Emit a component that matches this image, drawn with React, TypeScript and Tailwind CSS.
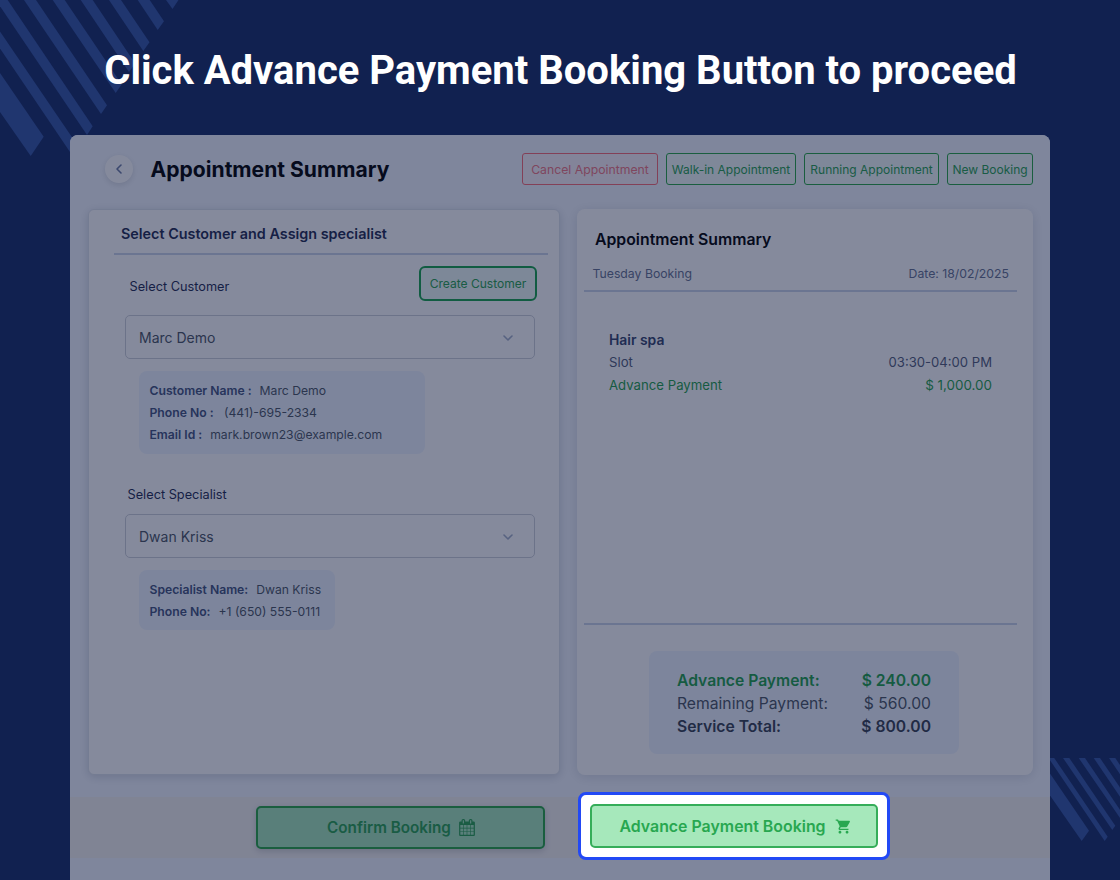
import { ChevronDown, ChevronLeft } from "lucide-react";
import { MdShoppingCart } from "react-icons/md";
import clsx from "clsx";

const actions = [
  { label: "Cancel Appointment", size: "w-[136px] pt-0.5 text-[12.240px]", tone: "border-[#fa6a75] text-[#f27682] bg-[#fbf3f8]" },
  { label: "Walk-in Appointment", size: "w-[130px] pt-px text-[12px]", tone: "border-[#28a745] text-[#28a24f] bg-[#f2faf9]" },
  { label: "Running Appointment", size: "w-[135px] pt-px text-[12px]", tone: "border-[#28a745] text-[#28a24f] bg-[#f2faf9]" },
  { label: "New Booking", size: "w-[86px] pt-px text-[12px]", tone: "border-[#28a745] text-[#28a24f] bg-[#f2faf9]" },
];

const customer = [
  { label: "Customer Name :", value: "Marc Demo", gap: "gap-2" },
  { label: "Phone No :", value: "(441)-695-2334", gap: "gap-[10.500px]" },
  { label: "Email Id :", value: "mark.brown23@example.com", gap: "gap-2" },
];

const specialist = [
  { label: "Specialist Name:", value: "Dwan Kriss", gap: "gap-2" },
  { label: "Phone No:", value: "+1 (650) 555-0111", gap: "gap-2" },
];

const totals = [
  { label: "Advance Payment:", value: "$ 240.00", tone: "font-semibold text-[#1fa14a]" },
  { label: "Remaining Payment:", value: "$ 560.00", tone: "text-[#4b5563]" },
  { label: "Service Total:", value: "$ 800.00", tone: "font-semibold text-[#374151]" },
];

function Stripes() {
  return (
    <svg className="absolute inset-0" width="1120" height="880" fill="#20366f">
      <path d="M166 0h12.500l-6 9z" />
      <path d="M137.700 0h12l14.300 21.300-6.300 8.700z" />
      <path d="M109 0h12l28.500 42.300-6.200 8.700z" />
      <path d="M80.700 0h12l42.500 63.400-6.200 8.600z" />
      <path d="M52.700 0h12l57 84.300-6 8.700z" />
      <path d="M24 0h12l71 105.300-6 8.700z" />
      <path d="M-4.300 0h12l85 126.300-5.700 8.700z" />
      <path d="M0 31.500l79 116-6.300 8.500L0 48.500z" />
      <path d="M0 73l43.700 63.700-13 19.300L0 112z" />
      <path d="M1048.500 758h5.700l53.500 78.700-3 4.300z" />
      <path d="M1063 758h6.300l46 67.700-3 4.300z" />
      <path d="M1078.700 758h6.300l40 59-3 4z" />
      <path d="M1093.700 758h6.300l25 37v9z" />
      <path d="M1109 758h6.300l10 15v9z" />
      <path d="M1050 773.500l39 57.200-7.300 10.300-31.700-45.500z" />
    </svg>
  );
}

function CalendarIcon() {
  return (
    <svg viewBox="0 0 1664 1792" className="h-[17px] w-4" fill="currentColor">
      <path d="M128 1664h288v-288h-288v288zm352 0h320v-288h-320v288zm-352-352h288v-320h-288v320zm352 0h320v-320h-320v320zm-352-384h288v-288h-288v288zm736 736h320v-288h-320v288zm-384-736h320v-288h-320v288zm768 736h288v-288h-288v288zm-384-352h320v-320h-320v320zm-352-864v-288q0-13-9.500-22.500t-22.500-9.500h-64q-13 0-22.500 9.500t-9.500 22.500v288q0 13 9.500 22.500t22.500 9.500h64q13 0 22.500-9.500t9.500-22.500zm736 864h288v-320h-288v320zm-384-384h320v-288h-320v288zm384 0h288v-288h-288v288zm32-480v-288q0-13-9.500-22.500t-22.500-9.500h-64q-13 0-22.500 9.500t-9.500 22.500v288q0 13 9.500 22.500t22.500 9.500h64q13 0 22.500-9.500t9.500-22.500zm384-64v1280q0 52-38 90t-90 38h-1408q-52 0-90-38t-38-90v-1280q0-52 38-90t90-38h128v-96q0-66 47-113t113-47h64q66 0 113 47t47 113v96h384v-96q0-66 47-113t113-47h64q66 0 113 47t47 113v96h128q52 0 90 38t38 90z" />
    </svg>
  );
}

function SelectBox({ value }: { value: string }) {
  return (
    <div className="flex h-11 w-[410px] items-center justify-between rounded-[5px] border border-[#cdd0d8] pr-[18.500px] pl-[13px] text-[14px] text-[#4b5563]">
      <span>{value}</span>
      <ChevronDown className="mt-0.5 size-4 text-[#a3afc8]" strokeWidth={2.4} />
    </div>
  );
}

function InfoBox({ rows, className }: { rows: typeof customer; className: string }) {
  return (
    <div className={clsx("ml-[14px] flex flex-col rounded-lg bg-[#eff5ff] pl-[10.500px] text-[12.180px]", className)}>
      {rows.map((r) => (
        <div key={r.label} className={clsx("flex h-[22px] items-center whitespace-nowrap", r.gap)}>
          <span className="font-semibold text-[#42527c]">{r.label}</span>
          <span className="text-[#4b5563]">{r.value}</span>
        </div>
      ))}
    </div>
  );
}

export default function App() {
  return (
    <div className="relative h-[880px] w-[1120px] overflow-hidden bg-[#112150] font-['Inter',sans-serif]">
      <Stripes />
      <h1 className="relative flex h-[135px] items-center justify-center pt-1.5 pl-px font-['Roboto',sans-serif] text-[40px] font-bold whitespace-nowrap text-white">
        Click Advance Payment Booking Button to proceed
      </h1>

      <main className="relative mx-auto h-[745px] w-[980px] overflow-hidden rounded-t-lg bg-[#f3f7ff]">
        {/* Header */}
        <header className="flex h-[74px] items-center pr-[17px] pb-1.5 pl-[35px]">
          <button className="flex size-7 items-center justify-center rounded-full bg-white shadow-[0_2px_6px_rgba(0,0,0,0.12)]">
            <ChevronLeft className="size-4 text-[#6b7ba3]" strokeWidth={2.4} />
          </button>
          <span className="ml-[17.500px] pt-0.5 text-[21.100px] font-bold whitespace-nowrap text-black">
            Appointment Summary
          </span>
          <div className="ml-auto flex gap-2">
            {actions.map((a) => (
              <button key={a.label} className={clsx("h-8 rounded-[3px] border whitespace-nowrap", a.size, a.tone)}>
                {a.label}
              </button>
            ))}
          </div>
        </header>

        <div className="flex h-[566px] gap-[17px] pl-[18px]">
          {/* Customer and specialist */}
          <section className="h-[566px] w-[472px] rounded-md border border-[#dde2ea] bg-white px-[25px] shadow-[0_2px_10px_rgba(15,23,42,0.16)]">
            <h2 className="flex h-[45px] w-[434px] items-center border-b-2 border-[#cbd5e9] pt-[4px] pl-[7px] text-[14.370px] font-semibold text-[#1f2b50]">
              Select Customer and Assign specialist
            </h2>
            <div className="pl-[11px]">
              <div className="flex h-[60px] w-[412px] justify-between pt-[11px] pl-[4.500px] text-[12.750px]">
                <span className="mt-[11px] leading-5 text-[#1f2b50]">Select Customer</span>
                <button className="h-[35px] w-[118px] rounded-md border-2 border-[#16a34a] bg-[#effaf6] pt-0.5 text-[12.050px] text-[#28a24f]">
                  Create Customer
                </button>
              </div>
              <SelectBox value="Marc Demo" />
              <InfoBox rows={customer} className="mt-3 h-[83px] w-[286px] pt-[9px]" />
              <div className="mt-[31px] mb-[9px] pl-[2.500px] text-[12.750px] leading-5 text-[#1f2b50]">
                Select Specialist
              </div>
              <SelectBox value="Dwan Kriss" />
              <InfoBox rows={specialist} className="mt-3 h-[60px] w-[196px] pt-[9px]" />
            </div>
          </section>

          {/* Summary */}
          <section className="flex h-[566px] w-[456px] flex-col rounded-lg bg-white px-[7px] shadow-[0_2px_12px_rgba(15,23,42,0.13)]">
            <h2 className="mt-[21px] pl-[11px] text-[15.800px] leading-5 font-semibold text-black">Appointment Summary</h2>
            <div className="mt-[11px] flex h-[31px] w-[433px] justify-between border-b-2 border-[#cbd5e9] pt-[3px] pr-2 pl-[8.500px] text-[12.250px] leading-5 text-[#65718f]">
              <span>Tuesday Booking</span>
              <span>Date: 18/02/2025</span>
            </div>
            <div className="mt-[37px] h-[294px] w-[408px] pl-[25px] text-[13.200px] leading-[22.400px] text-[#535d79]">
              <div className="text-[13.900px] font-semibold text-[#35436b]">Hair spa</div>
              <div className="flex justify-between">
                <span>Slot</span>
                <span className="text-[13.100px]">03:30-04:00 PM</span>
              </div>
              <div className="flex justify-between text-[#1fa14a]">
                <span>Advance Payment</span>
                <span className="text-[13.400px]">$ 1,000.00</span>
              </div>
            </div>
            <div className="w-[433px] border-b-2 border-[#cbd5e9]" />
            <div className="mt-[26px] ml-[65px] flex h-[103px] w-[310px] flex-col justify-center rounded-lg bg-[#eff5ff] px-7 pt-0.5 text-[15.700px] leading-[23px]">
              {totals.map((t) => (
                <div key={t.label} className={clsx("flex justify-between", t.tone)}>
                  <span>{t.label}</span>
                  <span>{t.value}</span>
                </div>
              ))}
            </div>
          </section>
        </div>

        {/* Footer actions */}
        <footer className="mt-[22px] flex h-[61px] items-start bg-[#f4f2ef] pt-[9px] pl-[186px]">
          <button className="flex h-[43px] w-[289px] items-center justify-center gap-2 rounded-[5px] border-2 border-[#28a745] bg-[#a6e8bb] pl-px text-[15.250px] font-semibold text-[#28a24f] shadow-[0_2px_6px_rgba(15,23,42,0.18)]">
            <span className="pt-0.5">Confirm Booking</span>
            <CalendarIcon />
          </button>
          <div className="relative z-10 -mt-[14px] ml-[33px] flex h-[68px] w-[312px] items-center justify-center rounded-lg border-3 border-[#2249f5] bg-white">
            <button className="flex h-11 w-[288px] items-center justify-center gap-[9px] rounded-[5px] border-2 border-[#35ad59] bg-[#a6e8bb] pl-[3px] text-[15.900px] font-semibold text-[#28a750]">
              <span className="pt-px">Advance Payment Booking</span>
              <MdShoppingCart className="size-[17px]" />
            </button>
          </div>
        </footer>

        {/* Dim everything but the highlighted button */}
        <div className="pointer-events-none absolute inset-0 bg-[#0b1539]/50" />
      </main>
    </div>
  );
}
